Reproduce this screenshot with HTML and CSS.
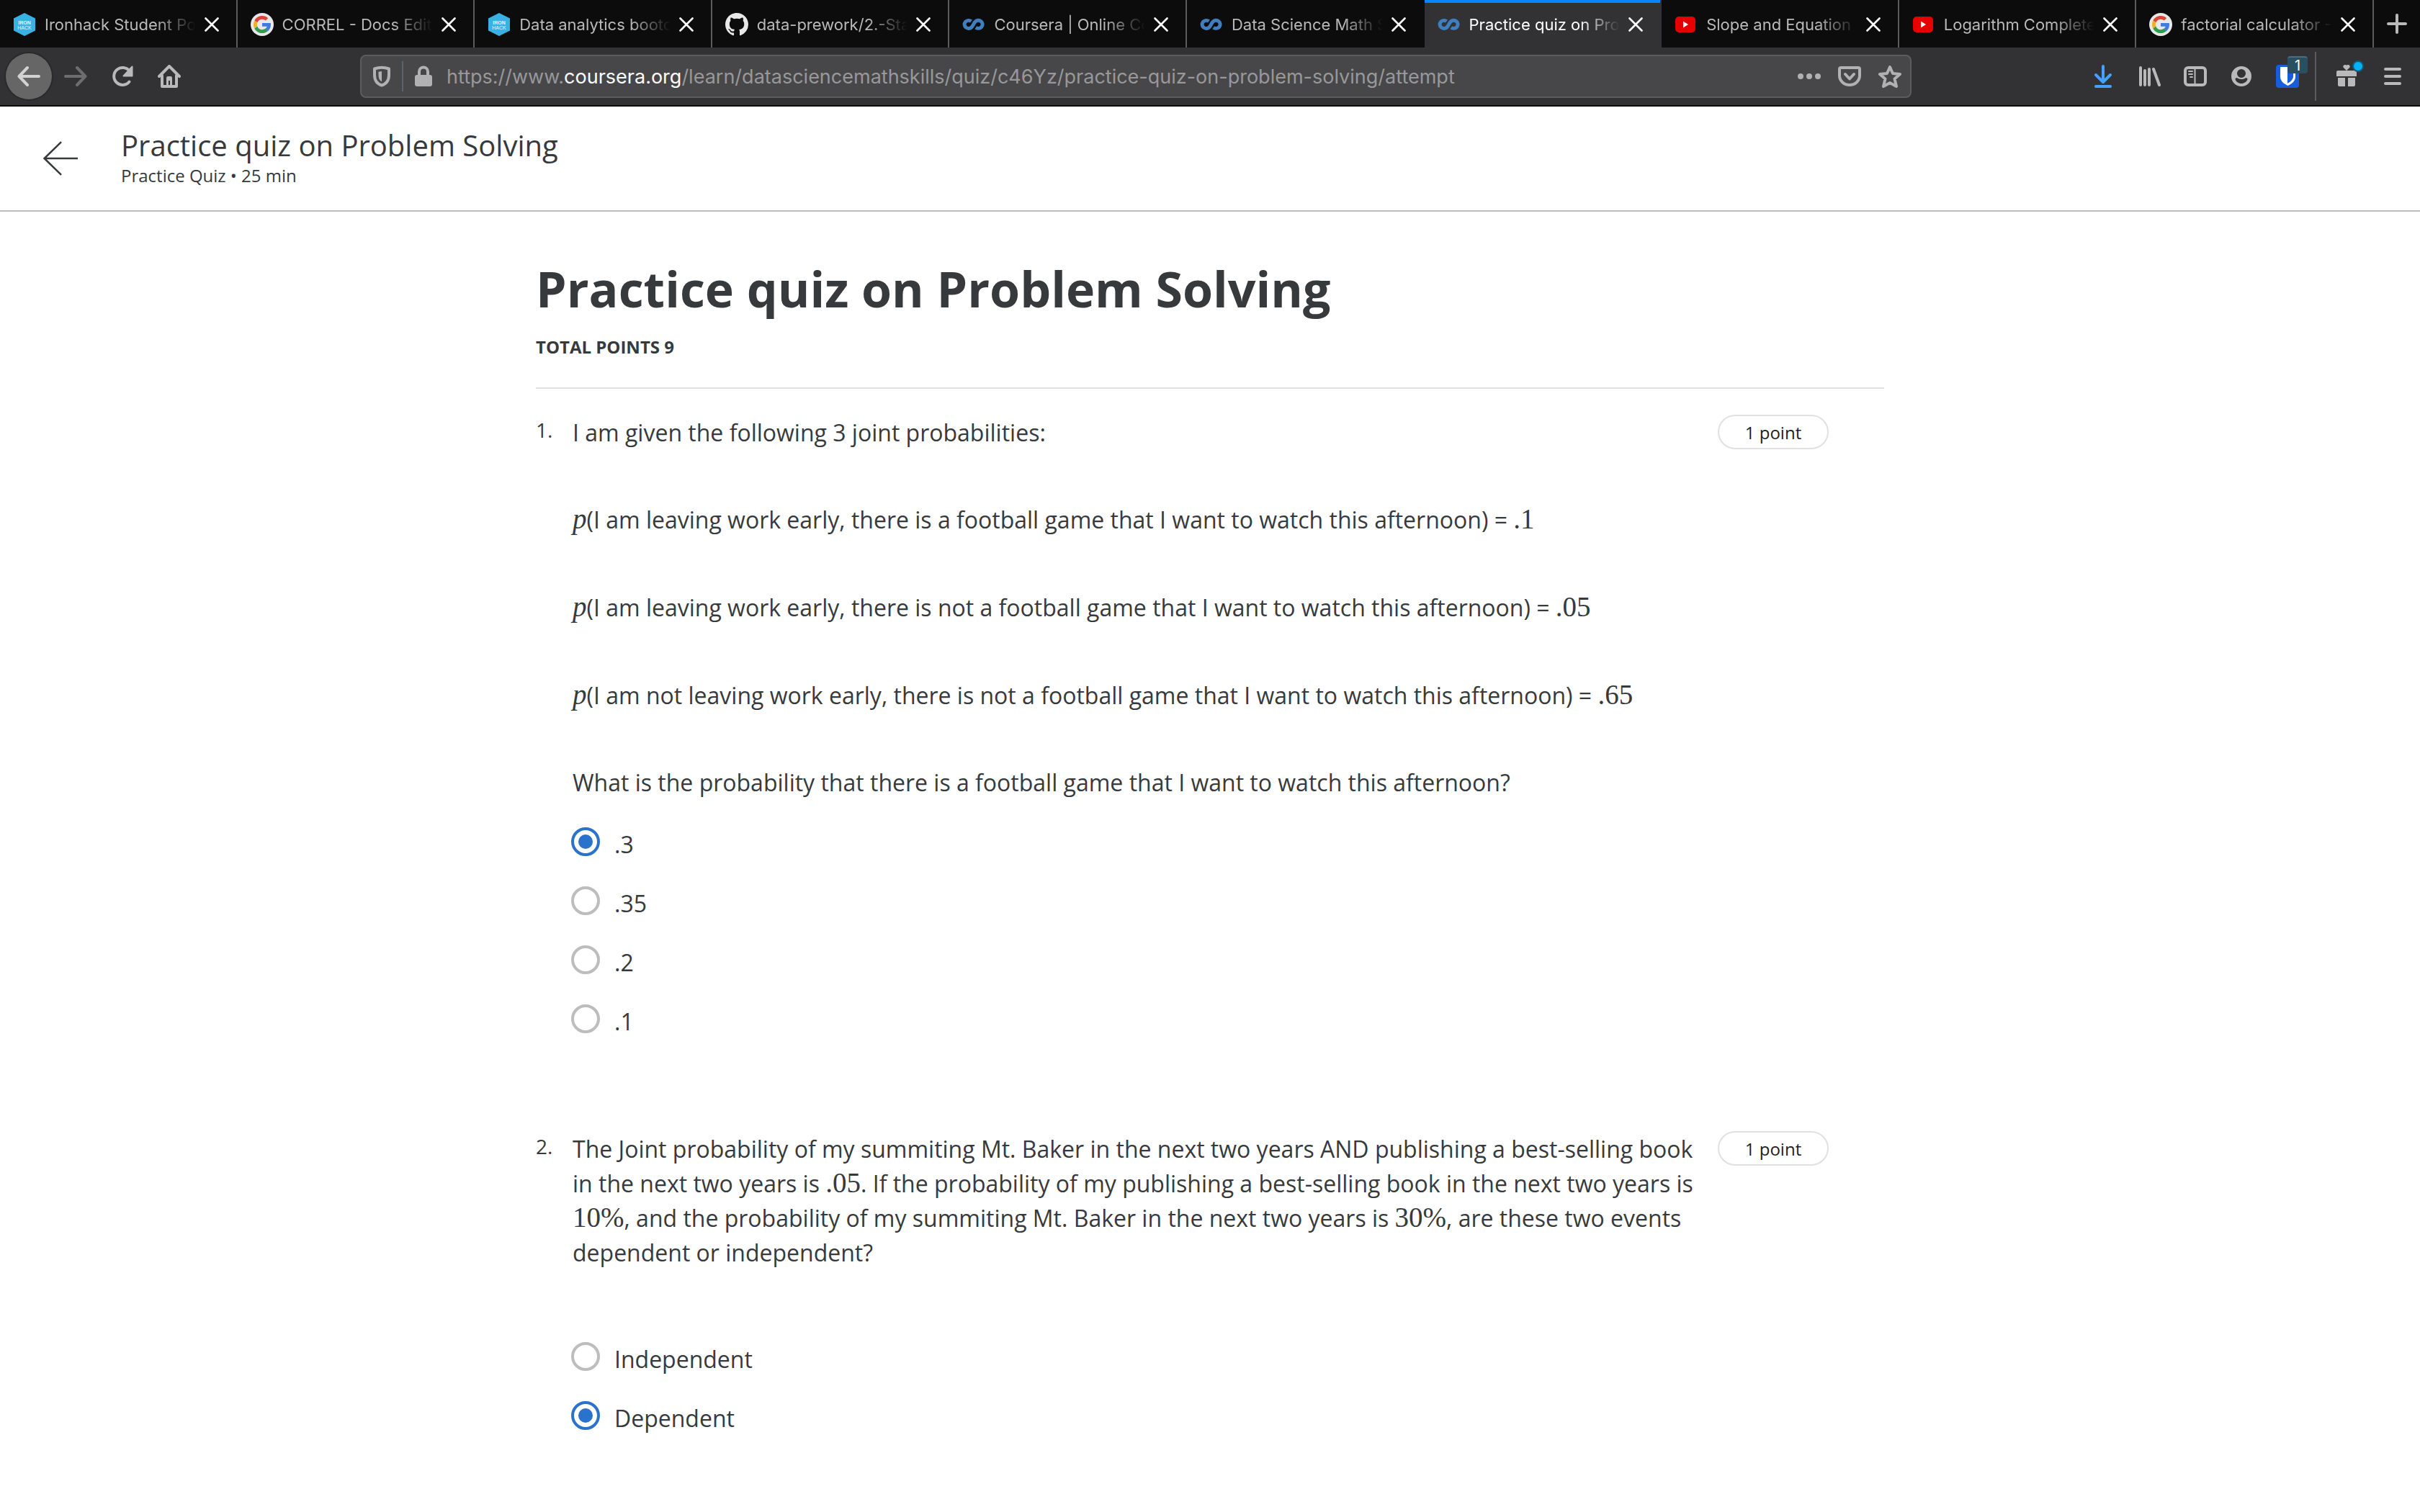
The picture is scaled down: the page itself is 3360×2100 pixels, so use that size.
FILE: index.html
```html
<!DOCTYPE html>
<html lang="en">
<head>
<meta charset="utf-8">
<title>Practice quiz on Problem Solving</title>
<link rel="stylesheet" href="styles.css">
</head>
<body>
<svg class="sprite" aria-hidden="true">
  <symbol id="close" viewBox="0 0 20 20"><path d="M1.500 1.500l17 17M18.500 1.500l-17 17" fill="none" stroke="currentColor" stroke-width="2.600" stroke-linecap="round"/></symbol>
  <symbol id="ironhack" viewBox="0 0 32 32"><path d="M16 0l15 7.500v17L16 32 1 24.500v-17z" fill="#39b1e3"/><text x="16" y="15.500" class="hex-text hex-bold">IRON</text><text x="16" y="23" class="hex-text">HACK</text></symbol>
  <symbol id="google" viewBox="0 0 32 32"><circle cx="16" cy="16" r="16" fill="#e8e8e9"/><g transform="translate(1.600 1.600) scale(.6)"><path fill="#3f7be0" d="M43.600 20.500H24v8h11.300c-.8 2.200-2.200 4.200-4.100 5.600l6.200 5.200C37 39.700 44 34 44 24c0-1.300-.1-2.700-.4-3.500z"/><path fill="#db4437" d="M6.300 14.700l6.600 4.800C14.700 15.100 19 12 24 12c3.100 0 5.800 1.200 7.900 3l5.700-5.700C34 6.100 29.300 4 24 4 16.300 4 9.700 8.300 6.300 14.700z"/><path fill="#2f9c4f" d="M24 44c5.200 0 9.900-2 13.400-5.200l-6.200-5.200C29.200 35.100 26.700 36 24 36c-5.200 0-9.600-3.300-11.300-8l-6.500 5C9.500 39.600 16.200 44 24 44z"/><path fill="#eeb026" d="M12 24c0-1.600.3-3.100.9-4.500l-6.600-4.800C4.800 17.500 4 20.600 4 24s.8 6.400 2.200 9.100l6.500-5C12.200 26.800 12 25.400 12 24z"/></g></symbol>
  <symbol id="github" viewBox="0 0 16 16"><path fill="#e8e8e9" d="M8 0C3.580 0 0 3.580 0 8c0 3.540 2.290 6.530 5.470 7.590.4.070.55-.17.55-.38 0-.19-.01-.82-.01-1.490-2.010.37-2.530-.49-2.690-.94-.09-.23-.48-.94-.82-1.130-.28-.15-.68-.52-.01-.53.63-.01 1.080.58 1.230.82.72 1.210 1.870.87 2.330.66.07-.52.28-.87.51-1.070-1.780-.2-3.640-.89-3.640-3.950 0-.87.31-1.590.82-2.150-.08-.2-.36-1.020.08-2.120 0 0 .67-.21 2.200.82.64-.18 1.320-.27 2-.27s1.360.09 2 .27c1.530-1.040 2.200-.82 2.200-.82.44 1.100.16 1.920.08 2.120.51.56.82 1.270.82 2.150 0 3.070-1.870 3.750-3.650 3.950.29.25.54.73.54 1.480 0 1.070-.01 1.930-.01 2.200 0 .21.15.46.55.38A8.010 8.010 0 0 0 16 8c0-4.420-3.580-8-8-8z"/></symbol>
  <symbol id="coursera" viewBox="0 0 32 32"><path d="M12.500 11.600A5.800 5.500 0 1 0 13.300 19.500C15.500 17 15.800 14.500 18 12.200A5.800 5.500 0 1 1 18.800 20.200" fill="none" stroke="#3f7fbf" stroke-width="5"/></symbol>
  <symbol id="youtube" viewBox="0 0 32 32"><rect x="1" y="5" width="28" height="22" rx="5" fill="#e60000"/><path d="M12 11.500v9l7-4.500z" fill="#fff"/></symbol>
</svg>

<div class="browser">
  <nav class="tabs" aria-label="Open tabs">
    <div class="tab"><svg class="icon"><use href="#ironhack"/></svg><span class="tab-title">Ironhack Student Portal</span><button class="tab-close" aria-label="Close tab"><svg><use href="#close"/></svg></button></div>
    <div class="tab"><svg class="icon"><use href="#google"/></svg><span class="tab-title">CORREL - Docs Editors</span><button class="tab-close" aria-label="Close tab"><svg><use href="#close"/></svg></button></div>
    <div class="tab"><svg class="icon"><use href="#ironhack"/></svg><span class="tab-title">Data analytics bootcamp</span><button class="tab-close" aria-label="Close tab"><svg><use href="#close"/></svg></button></div>
    <div class="tab"><svg class="icon"><use href="#github"/></svg><span class="tab-title">data-prework/2.-Statistics</span><button class="tab-close" aria-label="Close tab"><svg><use href="#close"/></svg></button></div>
    <div class="tab"><svg class="icon"><use href="#coursera"/></svg><span class="tab-title">Coursera | Online Courses</span><button class="tab-close" aria-label="Close tab"><svg><use href="#close"/></svg></button></div>
    <div class="tab tab-before"><svg class="icon"><use href="#coursera"/></svg><span class="tab-title">Data Science Math Skills</span><button class="tab-close" aria-label="Close tab"><svg><use href="#close"/></svg></button></div>
    <div class="tab tab-active"><svg class="icon"><use href="#coursera"/></svg><span class="tab-title">Practice quiz on Problem</span><button class="tab-close" aria-label="Close tab"><svg><use href="#close"/></svg></button></div>
    <div class="tab"><svg class="icon"><use href="#youtube"/></svg><span class="tab-title">Slope and Equation of</span><button class="tab-close" aria-label="Close tab"><svg><use href="#close"/></svg></button></div>
    <div class="tab"><svg class="icon"><use href="#youtube"/></svg><span class="tab-title">Logarithm Complete</span><button class="tab-close" aria-label="Close tab"><svg><use href="#close"/></svg></button></div>
    <div class="tab"><svg class="icon"><use href="#google"/></svg><span class="tab-title">factorial calculator - G</span><button class="tab-close" aria-label="Close tab"><svg><use href="#close"/></svg></button></div>
    <button class="new-tab" aria-label="New tab"><svg class="icon" viewBox="0 0 32 32"><path d="M16 4v24M4 16h24" class="line line-4"/></svg></button>
  </nav>

  <div class="toolbar">
    <div class="nav-buttons">
      <button class="tool tool-back" aria-label="Back"><svg class="icon" viewBox="0 0 32 32"><path d="M30 16H3M14 4L2.500 16 14 28" class="line line-4"/></svg></button>
      <button class="tool tool-dim" aria-label="Forward"><svg class="icon" viewBox="0 0 32 32"><path d="M2 16h27M18 4l11.500 12L18 28" class="line line-4"/></svg></button>
      <button class="tool" aria-label="Reload"><svg class="icon" viewBox="0 0 32 32"><path d="M25.500 23.500A12 12 0 1 1 26 9" class="line line-4"/><path d="M29.500 2.500v13h-12z" fill="currentColor" stroke="currentColor" stroke-width="2" stroke-linejoin="round"/></svg></button>
      <button class="tool" aria-label="Home"><svg class="icon" viewBox="0 0 32 32"><path d="M2 16L16 2l14 14M6 15v15h20V15" class="line line-4"/><path d="M12 30V18a2 2 0 0 1 2-2h4a2 2 0 0 1 2 2v12h-3v-8h-2v8z" fill="currentColor"/></svg></button>
    </div>
    <div class="address">
      <svg class="icon" viewBox="0 0 32 32"><path d="M6 5.500Q16 2 26 5.500V14c0 7-3.500 12.500-10 14.500C9.500 26.500 6 21 6 14z" class="line line-4"/><path d="M16 9v14.500c-3-1.500-4.500-5-4.500-9.500v-4.200z" fill="currentColor"/></svg>
      <span class="address-rule"></span>
      <svg class="icon" viewBox="0 0 32 32"><path d="M10 15V9.500a6 6 0 0 1 12 0V15" class="line line-4"/><rect x="4" y="14" width="24" height="16" rx="3" fill="currentColor"/></svg>
      <div class="url" role="textbox" contenteditable="true" spellcheck="false" aria-label="Address">https://www.<span class="url-domain">coursera.org</span>/learn/datasciencemathskills/quiz/c46Yz/practice-quiz-on-problem-solving/attempt</div>
      <button class="address-button" aria-label="Page actions"><svg class="icon" viewBox="0 0 32 32" fill="currentColor"><circle cx="4" cy="16" r="4"/><circle cx="16" cy="16" r="4"/><circle cx="28" cy="16" r="4"/></svg></button>
      <button class="address-button" aria-label="Save to Pocket"><svg class="icon" viewBox="0 0 32 32"><path d="M4 4h24a2 2 0 0 1 2 2v9a14 13 0 0 1-28 0V6a2 2 0 0 1 2-2zM10 13l6 6.500 6-6.500" class="line line-4"/></svg></button>
      <button class="address-button" aria-label="Bookmark"><svg class="icon" viewBox="0 0 32 32"><path d="M16 3l4 9 10 1-7.500 6.500L25 30l-9-5-9 5 2.500-10.500L2 13l10-1z" class="line line-4"/></svg></button>
    </div>
    <div class="tool-buttons">
      <button class="tool tool-blue" aria-label="Downloads"><svg class="icon" viewBox="0 0 32 32"><path d="M16 2v20M6 14l10 10 10-10" class="line line-4"/><rect x="4" y="28" width="24" height="4" rx="2" fill="currentColor"/></svg></button>
      <button class="tool" aria-label="Library"><svg class="icon" viewBox="0 0 32 32"><path d="M4 4v24M10 8v20M16 6v22M22 6l8 22" class="line line-4"/></svg></button>
      <button class="tool" aria-label="Sidebars"><svg class="icon" viewBox="0 0 32 32"><rect x="2" y="4" width="28" height="24" rx="4" class="line line-4"/><path d="M15.500 5v22M7 9h5M7 13h5M9 17h3" class="line line-2"/></svg></button>
      <button class="tool" aria-label="Account"><svg class="icon" viewBox="0 0 32 32"><path fill="currentColor" fill-rule="evenodd" d="M16 2a14 14 0 1 0 0 28 14 14 0 0 0 0-28zM16 6a6 6 0 1 1 0 12 6 6 0 0 1 0-12zM7.500 20c0-1.200 1.500-2 3-1.500 3.500 2 7.500 2 11 0 1.500-.5 3 .3 3 1.500-1 3.500-4.500 6-8.500 6s-7.500-2.500-8.500-6z"/></svg></button>
      <button class="tool" aria-label="Bitwarden"><svg class="icon" viewBox="0 0 32 32"><rect width="32" height="32" rx="4" fill="#175ddc"/><path d="M6 3h21v13c0 6-4 10-10.500 13C10 26 6 22 6 16z" fill="#fff"/><path d="M16 6h8v10c0 4-3 7-8 9.800z" fill="#175ddc"/></svg><span class="badge">1</span></button>
      <span class="tool-rule"></span>
      <button class="tool" aria-label="What's new"><svg class="icon" viewBox="0 0 32 32" fill="currentColor"><path d="M16 8l-4.500-4.500a2.600 2.600 0 0 1 4.500-2.500 2.600 2.600 0 0 1 4.500 2.500z"/><path d="M2 10a2 2 0 0 1 2-2h24a2 2 0 0 1 2 2v6H2zM4 18h10v12H6a2 2 0 0 1-2-2zM18 18h10v10a2 2 0 0 1-2 2h-8z"/></svg><span class="dot"></span></button>
      <button class="tool" aria-label="Menu"><svg class="icon" viewBox="0 0 32 32"><path d="M6 6h20M6 16h20M6 26h20" class="line line-4"/></svg></button>
    </div>
  </div>
</div>

<header class="page-header">
  <a class="back-link" href="#" aria-label="Back to course"><svg viewBox="0 0 46 46"><path d="M46 23H2M24 1L1.500 23 24 45" fill="none" stroke="currentColor" stroke-width="2.400"/></svg></a>
  <div>
    <p class="page-title">Practice quiz on Problem Solving</p>
    <p class="page-meta">Practice Quiz • 25 min</p>
  </div>
</header>

<main class="quiz">
  <div class="quiz-head">
    <h1 class="quiz-title">Practice quiz on Problem Solving</h1>
    <p class="quiz-total">TOTAL POINTS 9</p>
  </div>

  <section class="question">
    <span class="number">1.</span>
    <div class="question-body">
      <div class="prompt" id="prompt-1">
        <p>I am given the following 3 joint probabilities:</p>
        <p class="equation"><i class="math">p</i>(I am leaving work early, there is a football game that I want to watch this afternoon) = <span class="math">.1</span></p>
        <p class="equation"><i class="math">p</i>(I am leaving work early, there is not a football game that I want to watch this afternoon) = <span class="math">.05</span></p>
        <p class="equation"><i class="math">p</i>(I am not leaving work early, there is not a football game that I want to watch this afternoon) = <span class="math">.65</span></p>
        <p>What is the probability that there is a football game that I want to watch this afternoon?</p>
      </div>
      <div class="options" role="radiogroup" aria-labelledby="prompt-1">
        <label class="option"><input class="radio" type="radio" name="q1" checked>.3</label>
        <label class="option"><input class="radio" type="radio" name="q1">.35</label>
        <label class="option"><input class="radio" type="radio" name="q1">.2</label>
        <label class="option"><input class="radio" type="radio" name="q1">.1</label>
      </div>
    </div>
    <span class="points">1 point</span>
  </section>

  <section class="question">
    <span class="number">2.</span>
    <div class="question-body">
      <div class="prompt prompt-spaced" id="prompt-2">
        <p>The Joint probability of my summiting Mt. Baker in the next two years AND publishing a best-selling book in the next two years is <span class="math">.05</span>. If the probability of my publishing a best-selling book in the next two years is <span class="math">10%</span>, and the probability of my summiting Mt. Baker in the next two years is <span class="math">30%</span>, are these two events dependent or independent?</p>
      </div>
      <div class="options" role="radiogroup" aria-labelledby="prompt-2">
        <label class="option"><input class="radio" type="radio" name="q2">Independent</label>
        <label class="option"><input class="radio" type="radio" name="q2" checked>Dependent</label>
      </div>
    </div>
    <span class="points">1 point</span>
  </section>
</main>
</body>
</html>
```

FILE: styles.css
```css
* { box-sizing: border-box; }

body {
  margin: 0;
  background: #fff;
  color: #373a3c;
  font: 32px/48px "Open Sans", sans-serif;
}

p, h1 { margin: 0; }

button {
  margin: 0;
  padding: 0;
  border: 0;
  background: none;
  color: inherit;
  font: inherit;
}

.sprite { display: none; }

.icon {
  display: block;
  flex: none;
  width: 32px;
  height: 32px;
}

.line {
  fill: none;
  stroke: currentColor;
  stroke-linecap: round;
  stroke-linejoin: round;
}
.line-2 { stroke-width: 2; }
.line-4 { stroke-width: 4; }

.hex-text {
  fill: #e4f5fc;
  font: 7px "Liberation Sans", sans-serif;
  text-anchor: middle;
}
.hex-bold { font-weight: 700; }

/* Browser frame */
.browser {
  background: #323234;
  border-bottom: 2px solid #0c0c0d;
  color: #b9b9ba;
  font-family: Inter, sans-serif;
}

.tabs {
  display: flex;
  height: 66px;
  background: #0c0c0d;
}

.tab {
  display: flex;
  flex: 1 1 0;
  align-items: center;
  min-width: 0;
  padding: 2px 24px 0 18px;
  border-right: 2px solid #5c5c5e;
  font-size: 22px;
  line-height: 32px;
}
.tab-before { border-right-color: #0c0c0d; }
.tab-active {
  border-right-color: #323234;
  background: #323234;
  box-shadow: inset 0 4px #0a84ff;
  color: #fff;
}

.tab-title {
  flex: 1;
  min-width: 0;
  margin: 0 12px;
  overflow: hidden;
  white-space: nowrap;
  -webkit-mask-image: linear-gradient(to left, transparent, #000 56px);
  mask-image: linear-gradient(to left, transparent, #000 56px);
}

.tab-close { flex: none; color: #fff; }
.tab-close svg { display: block; width: 20px; height: 20px; }

.new-tab {
  display: flex;
  flex: none;
  align-items: center;
  justify-content: center;
  width: 64px;
}

.toolbar {
  display: flex;
  align-items: center;
  height: 80px;
  padding: 0 6px 0 8px;
}

.nav-buttons, .tool-buttons { display: flex; align-items: center; }
.nav-buttons { gap: 1px; }

.tool {
  display: flex;
  position: relative;
  align-items: center;
  justify-content: center;
  width: 64px;
  height: 64px;
}
.tool-back {
  border-radius: 50%;
  background: #666667;
  box-shadow: 0 0 0 2px #2a2a2b;
  color: #d2d2d3;
}
.tool-dim { color: #6d6d6f; }
.tool-blue { color: #45a1ff; }

.tool-rule {
  width: 2px;
  height: 68px;
  margin: 0 10px 0 6px;
  background: #5c5c5e;
}

.badge {
  position: absolute;
  top: 4px;
  right: 4px;
  width: 28px;
  border-top: 2px solid #4a6f80;
  border-radius: 4px;
  background: #2a4f60;
  color: #fff;
  font-size: 20px;
  line-height: 22px;
}

.dot {
  position: absolute;
  top: 10px;
  right: 8px;
  width: 16px;
  height: 16px;
  border: 2px solid #15597a;
  border-radius: 50%;
  background: #00b3f4;
}

.address {
  display: flex;
  flex: 1;
  align-items: center;
  min-width: 0;
  height: 60px;
  margin: 0 234px 0 233px;
  padding-left: 12px;
  border: 2px solid #5c5c5e;
  border-radius: 8px;
  background: #474749;
  color: #b1b1b3;
}

.address-rule {
  width: 2px;
  height: 42px;
  margin: 0 12px;
  background: #5b6370;
}

.url {
  flex: 1;
  min-width: 0;
  margin-left: 16px;
  padding-top: 2px;
  overflow: hidden;
  color: #98989a;
  font-size: 27px;
  line-height: 40px;
  white-space: nowrap;
}
.url-domain { color: #fff; }

.address-button {
  display: flex;
  flex: none;
  justify-content: center;
  width: 56px;
}

/* Course item header */
.page-header {
  display: flex;
  align-items: center;
  gap: 60px;
  padding: 30px 60px;
  border-bottom: 2px solid #bdbdbd;
}

.back-link { color: #373a3c; }
.back-link svg { display: block; width: 48px; height: 48px; }

.page-title { font-size: 40px; line-height: 48px; }
.page-meta { font-size: 24px; line-height: 36px; }

/* Quiz */
.quiz {
  max-width: 1872px;
  margin: 0 auto;
  padding: 61px 0 106px;
}

.quiz-head {
  padding-bottom: 38px;
  border-bottom: 2px solid #e1e1e1;
}
.quiz-title { font-size: 68px; font-weight: 700; line-height: 92px; }
.quiz-total { margin-top: 17px; font-size: 24px; font-weight: 700; line-height: 36px; }

.question {
  display: grid;
  grid-template-columns: 51px minmax(0, 1fr) 154px;
  align-items: start;
  padding: 36px 77px 0 0;
}
.question + .question { padding-top: 128px; }

.number { font-size: 28px; line-height: 42px; }

.question-body { padding: 1px 24px 0 0; }

.prompt { display: grid; gap: 72px; margin-bottom: 38px; }
.prompt-spaced { margin-bottom: 100px; }
.equation { line-height: 50px; }

.math {
  font-family: "Liberation Serif", serif;
  font-size: 39px;
  line-height: 1px;
}

.options { display: grid; gap: 34px; margin-left: -2px; }

.option {
  display: flex;
  align-items: flex-start;
  gap: 20px;
}

.radio {
  display: grid;
  place-items: center;
  width: 40px;
  height: 40px;
  margin: 0;
  border: 4px solid #bdbdbd;
  border-radius: 50%;
  appearance: none;
}
.radio:checked { border-color: #2a73cc; }
.radio:checked::before {
  width: 20px;
  height: 20px;
  border-radius: 50%;
  background: #2a73cc;
  content: "";
}

.points {
  padding-top: 2px;
  border: 2px solid #e1e1e1;
  border-radius: 24px;
  color: #1f1f1f;
  font-size: 24px;
  line-height: 42px;
  text-align: center;
}
```
